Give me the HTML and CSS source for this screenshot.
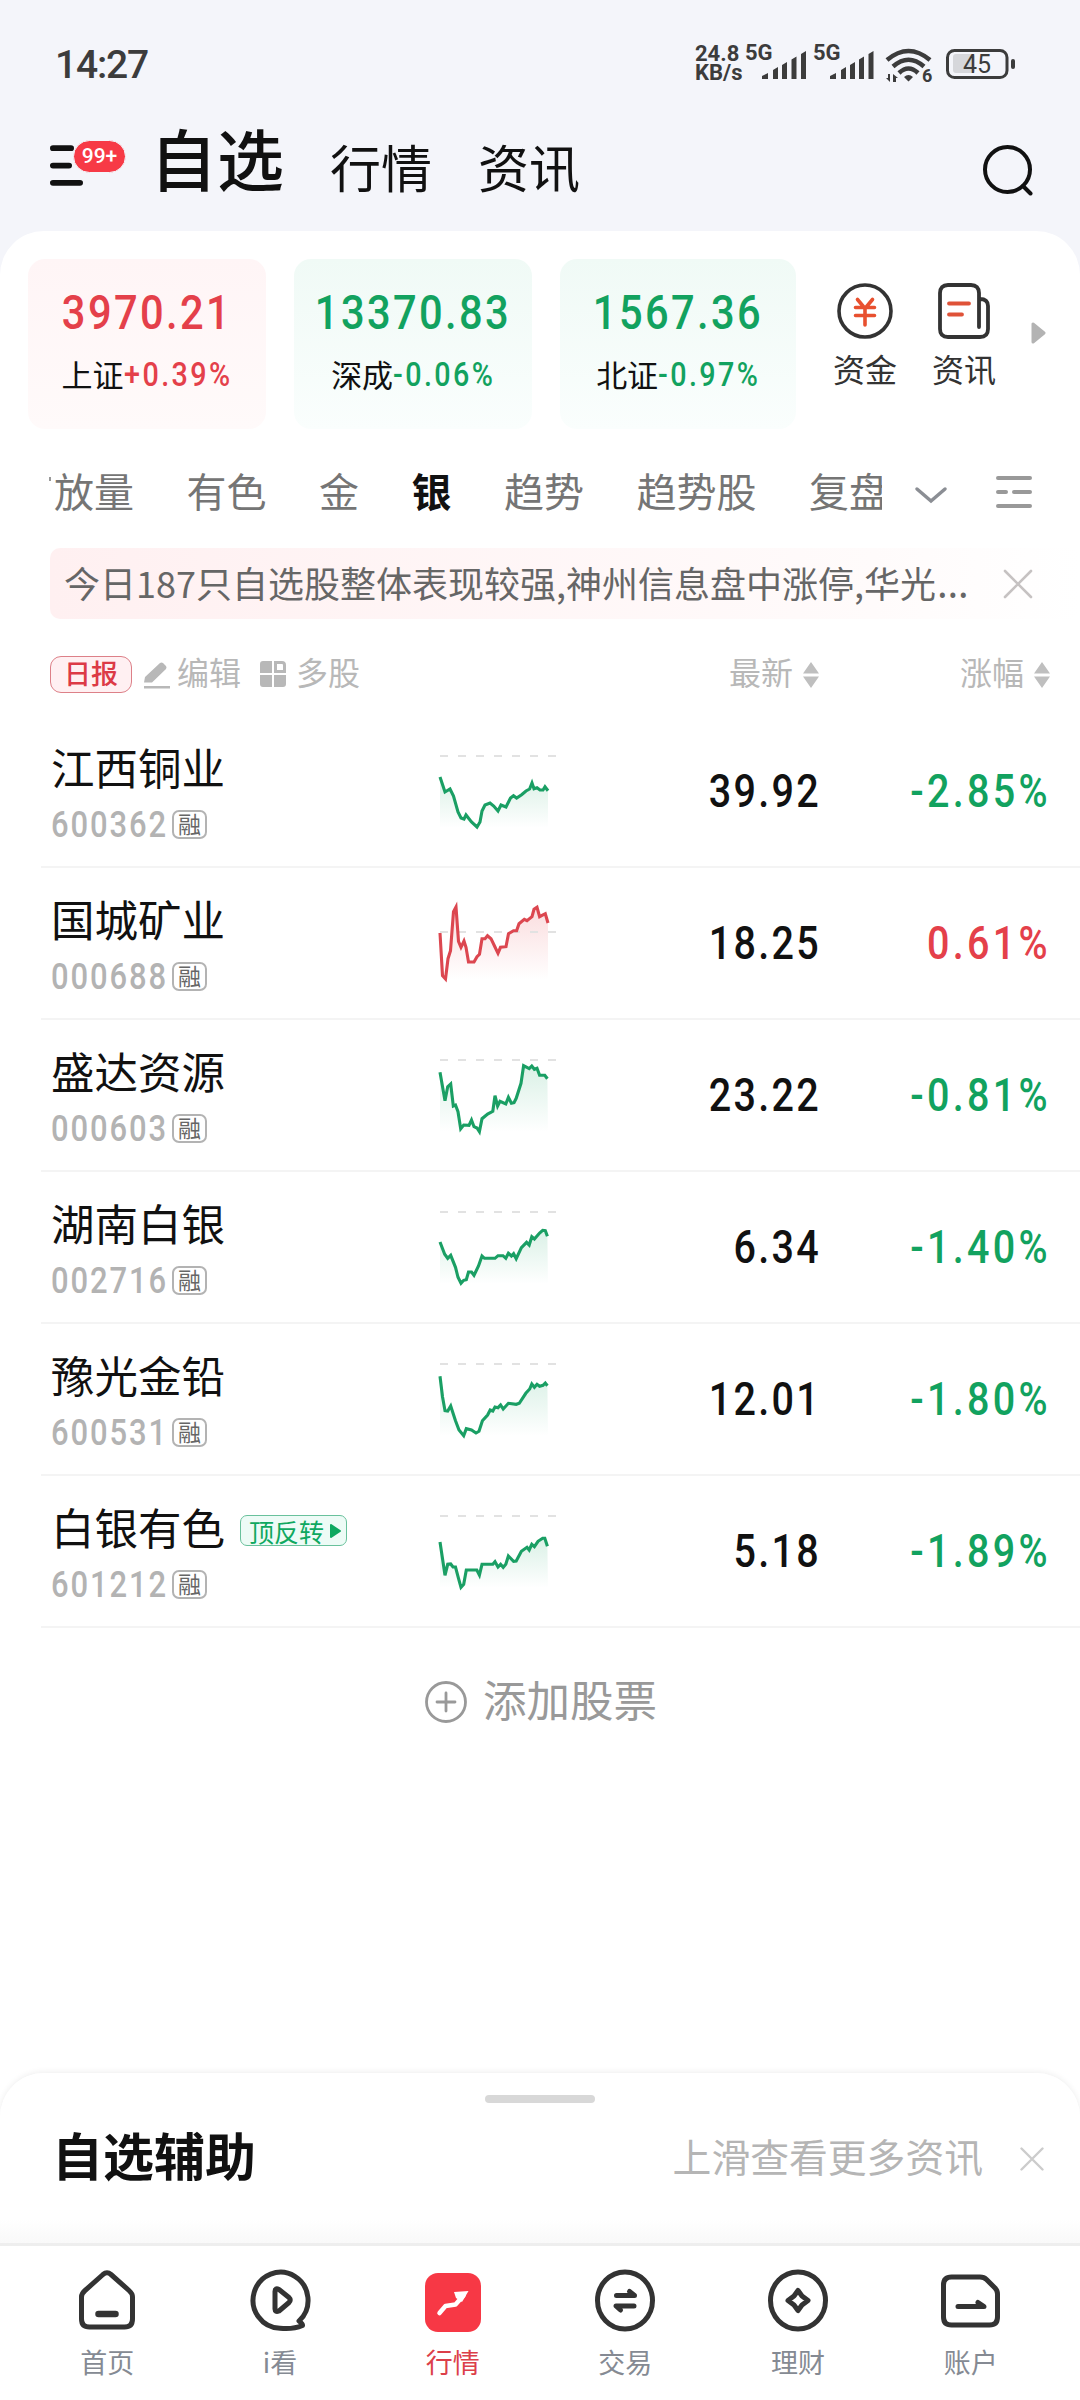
FILE: index.html
```html
<!DOCTYPE html>
<html lang="zh">
<head>
    <meta charset="UTF-8">
    <meta name="viewport" content="width=device-width, initial-scale=1.0">
    <title>自选</title>
    <link rel="stylesheet" href="styles.css">
</head>
<body>
    <div class="status-bar">
        <span class="time">14:27</span>
        <div class="status-icons">
            <div class="speed"><span>24.8</span><span>KB/s</span></div>
            <svg class="signal" width="66" height="40" viewBox="0 0 66 40">
                <text x="2" y="20">5G</text>
                <path d="M19 36l6-3v6h-6zM30 30l5-3v12h-5zM39 25l5-3v17h-5zM48.500 19.500l5-3v22.500h-5zM58 14l5-3v28h-5z"/>
            </svg>
            <svg class="signal" width="66" height="40" viewBox="0 0 66 40">
                <text x="3" y="20">5G</text>
                <path d="M20 36l6-3v6h-6zM31 30l5-3v12h-5zM40 25l5-3v17h-5zM49 19.500l5-3v22.500h-5zM58.500 14l5-3v28h-5z"/>
            </svg>
            <svg class="wifi" width="48" height="36" viewBox="0 0 48 36">
                <path d="M2 12Q23.500-6 45 12M8 18.500Q23.500 5 39 18.500M14 25Q23.500 16 33 25" fill="none" stroke="#3c3c3c" stroke-width="4.500"/>
                <path d="M19 29Q23.500 25 28 29L23.500 33.500ZM5 26v8l-4-4h2v-4zM8 34v-8l5 4h-2v4z"/>
                <text x="37" y="34">6</text>
            </svg>
            <svg class="battery" width="70" height="32" viewBox="0 0 70 32">
                <rect x="1.500" y="1.500" width="59.500" height="27" rx="7" fill="none" stroke="#3c3c3c" stroke-width="3"/>
                <rect x="7" y="5" width="22" height="19" rx="3" fill="#d6d7db"/>
                <rect x="65" y="10" width="4" height="10" rx="2"/>
                <text x="17" y="24">45</text>
            </svg>
        </div>
    </div>

    <div class="header">
        <div class="menu">
            <svg width="40" height="44" viewBox="0 0 40 44">
                <path d="M5 6.500h18M5 24.500h16M5 42.500h27" transform="scale(1 .96)" fill="none" stroke="#111" stroke-width="6" stroke-linecap="round"/>
            </svg>
            <span class="badge">99+</span>
        </div>
        <span class="title active">自选</span>
        <span class="title">行情</span>
        <span class="title">资讯</span>
        <svg class="search" width="52" height="52" viewBox="0 0 52 52" fill="none" stroke="#111" stroke-width="4" stroke-linecap="round">
            <circle cx="25.500" cy="25.500" r="22.500"/>
            <path d="M41 42l7.500 7.500"/>
        </svg>
    </div>

    <div class="panel">
        <div class="indices">
            <div class="index-card up">
                <div class="value">3970.21</div>
                <div class="sub"><span>上证</span><b>+0.39%</b></div>
            </div>
            <div class="index-card down">
                <div class="value">13370.83</div>
                <div class="sub"><span>深成</span><b>-0.06%</b></div>
            </div>
            <div class="index-card down">
                <div class="value">1567.36</div>
                <div class="sub"><span>北证</span><b>-0.97%</b></div>
            </div>
            <div class="shortcut">
                <svg width="58" height="58" viewBox="0 0 58 58" fill="none" stroke-width="3.600" stroke-linecap="round">
                    <circle cx="29" cy="29" r="26" stroke="#333"/>
                    <path d="M21.500 17.500l7.500 9 7.500-9M19.500 25.500h19M19.500 33.500h19M29 26v17" stroke="#e8502f"/>
                </svg>
                <span>资金</span>
            </div>
            <div class="shortcut">
                <svg width="58" height="58" viewBox="0 0 58 58" fill="none" stroke-width="3.800" stroke-linecap="round">
                    <path d="M44 45V11q0-8-8-8H13q-8 0-8 8v36q0 8 8 8h32q8 0 8-8V24q0-7-8-7" stroke="#333"/>
                    <path d="M14 21.500h20M14 32.500h13" stroke="#df5238"/>
                </svg>
                <span>资讯</span>
            </div>
            <svg class="more" width="15" height="22" viewBox="0 0 15 22"><path d="M2 2v18L13 11z" fill="#b3b3b3" stroke="#b3b3b3" stroke-width="3" stroke-linejoin="round"/></svg>
        </div>

        <div class="tabs">
            <div class="tab-list">
                <i class="tab-rest"></i>
                <span>放量</span>
                <span>有色</span>
                <span>金</span>
                <span class="current">银</span>
                <span>趋势</span>
                <span>趋势股</span>
                <span>复盘</span>
            </div>
            <svg class="chevron" width="34" height="20" viewBox="0 0 34 20"><path d="M3 4l14 12L31 4" fill="none" stroke="#8b8e94" stroke-width="3.500" stroke-linecap="round"/></svg>
            <svg class="list-icon" width="38" height="34" viewBox="0 0 38 34"><path d="M3 3h32M3 17h8M19 17h16M3 31h32" fill="none" stroke="#999" stroke-width="4" stroke-linecap="round"/></svg>
        </div>

        <div class="notice">
            <div class="notice-text">今日187只自选股整体表现较强,神州信息盘中涨停,华光<span class="dots">…</span></div>
            <svg width="30" height="30" viewBox="0 0 30 30"><path d="M2 2l26 26M28 2L2 28" stroke="#c6c2c2" stroke-width="2.600" stroke-linecap="round"/></svg>
        </div>

        <div class="toolbar">
            <span class="daily">日报</span>
            <svg class="edit" width="26" height="28" viewBox="0 0 26 28" fill="#b8b8b8"><path d="M1 16L16 2q1.500-1 3 0l3 3q1 1.500 0 3L8 21.500H0z M0 25h26v2.500H0z"/></svg>
            <span>编辑</span>
            <svg class="grid" width="26" height="26" viewBox="0 0 26 26" fill="#b8b8b8">
                <path d="M3 0h9v12H0V3q0-3 3-3zM0 14h12v12H3q-3 0-3-3zM14 14h12v9q0 3-3 3h-9z"/>
                <path d="M15.500 1.500H22q2.500 0 2.500 2.500v6.500h-9z" fill="none" stroke="#b8b8b8" stroke-width="3"/>
            </svg>
            <span>多股</span>
            <div class="sort sort-price">最新 <svg width="16" height="26" viewBox="0 0 16 26"><path d="M8 0l8 11.500H0zM8 26l8-11.500H0z"/></svg></div>
            <div class="sort sort-change">涨幅 <svg width="16" height="26" viewBox="0 0 16 26"><path d="M8 0l8 11.500H0zM8 26l8-11.500H0z"/></svg></div>
        </div>

        <svg class="defs" width="0" height="0">
            <defs>
                <linearGradient id="fillGreen" x1="0" y1="0" x2="0" y2="1"><stop offset="0" stop-color="#1aa566" stop-opacity=".16"/><stop offset="1" stop-color="#1aa566" stop-opacity="0"/></linearGradient>
                <linearGradient id="fillRed" x1="0" y1="0" x2="0" y2="1"><stop offset="0" stop-color="#e64048" stop-opacity=".18"/><stop offset="1" stop-color="#e64048" stop-opacity="0"/></linearGradient>
            </defs>
        </svg>

        <div class="stocks" id="stocks"></div>

        <div class="add">
            <svg width="44" height="44" viewBox="0 0 44 44" fill="none" stroke="#999" stroke-width="2.800" stroke-linecap="round"><circle cx="22" cy="22" r="19.500"/><path d="M13 22h18M22 13v18"/></svg>
            <span>添加股票</span>
        </div>
    </div>

    <div class="sheet">
        <div class="handle"></div>
        <div class="sheet-row">
            <span class="sheet-title">自选辅助</span>
            <span class="sheet-tip">上滑查看更多资讯</span>
            <svg width="24" height="24" viewBox="0 0 24 24"><path d="M1.500 1.500l21 21M22.500 1.500l-21 21" stroke="#ccc" stroke-width="2.400" stroke-linecap="round"/></svg>
        </div>
    </div>

    <div class="nav">
        <div class="nav-item">
            <svg width="64" height="64" viewBox="0 0 64 64">
                <path d="M28 6.500q4-3.500 8 0L54 22.500q3.500 3 3.500 6.500v22q0 8-8 8h-35q-8 0-8-8V29q0-3.500 3.500-6.500z"/>
                <path d="M23.500 46h17" stroke-width="6.500"/>
            </svg>
            <span>首页</span>
        </div>
        <div class="nav-item">
            <svg width="64" height="64" viewBox="0 0 64 64">
                <path d="M51.500 52.500A27.500 28 0 1 0 32 60.200Q45 61.500 54.500 57.500Q55 56 51 53Z"/>
                <path d="M27 23.500q0-4 4-2L41 29.500q2.500 2.500 0 5L31 43q-4 1.500-4-2z"/>
            </svg>
            <span>i看</span>
        </div>
        <div class="nav-item on">
            <svg width="64" height="64" viewBox="0 0 64 64">
                <rect class="solid" x="4" y="5" width="56" height="59" rx="13"/>
                <path class="white" d="M18.500 45l6-7 10-1.500 8-9" stroke-width="4.500"/>
                <path class="white-fill" d="M33 24l14.500-1-6.500 11-6-4z"/>
            </svg>
            <span>行情</span>
        </div>
        <div class="nav-item">
            <svg width="64" height="64" viewBox="0 0 64 64">
                <ellipse cx="32" cy="32.500" rx="27.500" ry="28.500"/>
                <path d="M23.500 27.500h18l-5-4M41 38H23l4.500 4"/>
            </svg>
            <span>交易</span>
        </div>
        <div class="nav-item">
            <svg width="64" height="64" viewBox="0 0 64 64">
                <ellipse cx="32" cy="32.500" rx="27.500" ry="28.500"/>
                <path d="M32 22.500l4 5.500 6 4.500-6 4.500-4 5.500-4-5.500-6-4.500 6-4.500z"/>
            </svg>
            <span>理财</span>
        </div>
        <div class="nav-item">
            <svg width="64" height="64" viewBox="0 0 64 64">
                <path d="M12.500 9H41q4 0 6.500 2.500l8.500 8.500q2.500 2.500 2.500 6v23q0 8-8 8h-38q-8 0-8-8V17q0-8 8-8z"/>
                <path d="M19 38.500h26l-6-4"/>
            </svg>
            <span>账户</span>
        </div>
    </div>

    <script>
        // base 为昨收虚线的高度, line 为分时走势
        const stocks = [
            { name: '江西铜业', code: '600362', price: '39.92', change: '-2.85%', base: 41,
              line: '440,62 445,77 450,74 453.5,81 458,97 461,103 464,104 466,100 471.5,107 477,112 480,107 482,96 485,90 490,88 493.7,91 498,96 501,90 506,92 510.5,83 513.5,80.7 516.6,83 521.6,79.7 526,76 529.6,74 532,68 534,73.7 537,72.7 540,75 543,75 545,71.7 548,75.7' },
            { name: '国城矿业', code: '000688', price: '18.25', change: '0.61%', base: 65,
              line: '440,66 442.5,108.7 445.5,112 448,91.7 450.5,83.7 453.5,44.7 456,40 458.5,74.3 461,80.3 464,74 466,80.3 468.5,95 474,95 477,89.7 479.5,87.3 482,71.7 485,71.7 487.5,68.7 491,71.7 494.5,79 498,86.3 500.5,80.3 506,79.7 508.5,66.7 513.5,63.7 516.6,63.7 519,56.7 524.3,52.3 527,53.7 532,49.7 534,42.3 537,40.3 539.6,49.7 545.3,46.7 548,56' },
            { name: '盛达资源', code: '000603', price: '23.22', change: '-0.81%', base: 41,
              line: '440,53.3 445,81.7 447.7,67.7 450.7,65 453.3,87 455.5,86 458,92.7 460.7,109.7 463.7,106 469,106.3 471.5,101 474,107.7 477,109 479.4,112.7 482,99.7 487.6,95 492.8,92.3 495,76.7 497.6,87 500,82.3 505.8,85 508.4,78.3 511.4,84.3 514,83.7 516.2,79.3 521,64.3 523.6,46.7 529.2,49.7 531.8,47 534.4,50.3 537,49.3 539.6,56.3 544.8,56.3 547.4,59.7' },
            { name: '湖南白银', code: '002716', price: '6.34', change: '-1.40%', base: 41,
              line: '440,71 444.7,83.3 447.7,87.3 450.7,84.3 455.5,96.3 458,106.3 461,112.3 463.7,109.3 466.3,108.7 468.5,101 471.5,101 474,104.3 478.5,95 482,85 484.5,87.3 495,87.3 498,84.7 503,84.7 505.8,87.3 508.4,82.3 511.4,85 513.6,82.7 516.2,87.7 521.4,76.7 526.6,71.3 529.2,74 531.8,65.7 534.4,68 539.6,62 542.7,59.3 545.3,59.7 547.4,65.3' },
            { name: '豫光金铅', code: '600531', price: '12.01', change: '-1.80%', base: 41,
              line: '440,53.3 442.5,73.7 445,87.7 447.7,88 450.7,83 455.5,97.7 459,107 463.7,112.7 466.3,105.7 471.5,107 476,110 479,108.3 482.4,97.7 487.6,92 490.2,87 492.8,88 495,84 498,84.7 500.6,82 503.2,86 508.4,80.3 516.2,81.3 519.3,80.3 525.8,70.3 529.7,66 531.8,61 534.4,64.3 537,61.3 539.6,63.3 543,62.3 545.3,60 547.4,62.7' },
            { name: '白银有色', code: '601212', price: '5.18', change: '-1.89%', base: 41, tag: '顶反转',
              line: '440,67 445,100.3 447.7,89.3 450.7,89 453,92 455.5,92 458.5,103.3 461,112.3 463.7,109.3 466.3,95 476.8,95 479.4,100 482,89.3 492.8,89.3 495,86.7 498,92 500.6,89.3 503.2,92.3 505.8,89.3 508.4,81 513.6,86.3 516.2,86 521.4,76.3 527,72.3 529.2,75 531.8,69.3 534.4,71.7 538,66.3 542.7,63.3 544.8,63.3 547.4,71.3' }
        ];

        document.getElementById('stocks').innerHTML = stocks.map(s => {
            const down = s.change.startsWith('-');
            const tag = s.tag ? `<span class="tag">${s.tag}<svg width="11" height="14" viewBox="0 0 11 14"><path d="M1 1v12l9-6z" fill="#0fa860" stroke="#0fa860" stroke-width="2" stroke-linejoin="round"/></svg></span>` : '';
            return `
            <div class="stock ${down ? 'down' : 'up'}">
                <div class="info">
                    <div class="name">${s.name}${tag}</div>
                    <div class="code"><span class="code-num">${s.code}</span><span class="rong">融</span></div>
                </div>
                <svg class="spark" width="124" height="90" viewBox="436 30 124 90">
                    <polygon points="440,113 ${s.line} 548,113" fill="url(#${down ? 'fillGreen' : 'fillRed'})"/>
                    <path d="M440 ${s.base}h116" stroke="#e2e2e2" stroke-width="2" stroke-dasharray="8 10"/>
                    <polyline points="${s.line}" fill="none" stroke="${down ? '#1a9f64' : '#dc4750'}" stroke-width="3.1"/>
                </svg>
                <div class="price">${s.price}</div>
                <div class="change">${s.change}</div>
            </div>`;
        }).join('');
    </script>
</body>
</html>
```
FILE: styles.css
```css
* {
    box-sizing: border-box;
}
body {
    margin: 0;
    width: 1080px;
    height: 2400px;
    overflow: hidden;
    display: flex;
    flex-direction: column;
    background: linear-gradient(#f4f5fa 300px, #fff 300px);
    color: #111;
    font-family: "Noto Sans CJK SC", sans-serif;
    line-height: 1;
    white-space: nowrap;
}
svg {
    display: block;
    flex: none;
}

/* 状态栏 */
.status-bar {
    height: 120px;
    padding: 44px 64px 0 55px;
    display: flex;
    justify-content: space-between;
    color: #3c3c3c;
}
.status-bar svg {
    fill: #3c3c3c;
    font-family: Roboto, sans-serif;
}
.time {
    font: 500 39px/42px Roboto, sans-serif;
    letter-spacing: -1.2px;
}
.status-icons {
    display: flex;
    height: 40px;
}
.speed {
    width: 48px;
    display: flex;
    flex-direction: column;
    font: bold 22px/19px Roboto, sans-serif;
}
.signal {
    margin-top: -4px;
    margin-right: 1px;
    font-size: 22px;
    font-weight: bold;
}
.wifi {
    margin-left: 8px;
    margin-top: 4px;
    font-size: 18px;
    font-weight: bold;
}
.battery {
    margin-left: 13px;
    margin-top: 5px;
    font-size: 25px;
}

/* 顶部标题 */
.header {
    height: 111px;
    padding: 0 48px;
    display: flex;
    align-items: flex-start;
}
.menu {
    position: relative;
    width: 102px;
    padding-top: 22px;
}
.badge {
    position: absolute;
    left: 25px;
    top: 20px;
    width: 53px;
    height: 33px;
    border-radius: 17px;
    border: 1px solid #f4f5fa;
    background-color: #f73a46;
    color: #fff;
    font: 500 21px/31px Roboto, sans-serif;
    text-align: center;
}
.title {
    font-size: 51px;
    line-height: 51px;
    margin: 21px 46px 0 0;
}
.title.active {
    font-size: 67px;
    line-height: 67px;
    font-weight: 500;
    margin-top: 3px;
    margin-right: 46px;
}
.search {
    margin: 24px -2px 0 auto;
}

.panel {
    height: 1842px;
    background-color: #fff;
    border-radius: 44px 44px 0 0;
    padding-top: 28px;
}

/* 指数 */
.indices {
    height: 170px;
    padding-left: 28px;
    display: flex;
}
.index-card {
    width: 238px;
    height: 170px;
    margin-right: 28px;
    border-radius: 17px;
    text-align: center;
}
.index-card:nth-child(3) {
    width: 236px;
    margin-right: 30px;
}
.index-card.up {
    background: linear-gradient(#fff5f6, #fffafa);
}
.index-card.down {
    background: linear-gradient(#f0faf6, #fafefd);
}
.up .value, .up b, .up .change {
    color: #e4404a;
}
.down .value, .down b, .down .change {
    color: #12a25f;
}
/* 数字压窄一些, 接近行情数字字体 */
.value {
    height: 69px;
    padding-top: 29px;
    font: 500 49px/49px Roboto, sans-serif;
    letter-spacing: 2.8px;
    transform: scaleX(0.85);
    display: flex;
    justify-content: center;
}
.sub {
    height: 40px;
    margin-top: 27px;
    display: flex;
    justify-content: center;
    font-size: 31px;
    line-height: 37px;
}
.sub b {
    margin-right: -16px;
    font: 500 33px/40px Roboto, sans-serif;
    letter-spacing: 2.8px;
    transform: scaleX(0.87);
    transform-origin: left;
}
.shortcut {
    width: 64px;
    margin-right: 35px;
    padding-top: 23px;
    display: flex;
    flex-direction: column;
    align-items: center;
    font-size: 32px;
    color: #333;
}
.index-card + .shortcut {
    margin-left: 7px;
}
.shortcut span {
    margin-top: 12px;
}
.more {
    margin-top: 63px;
}

/* 分组标签 */
.tabs {
    height: 119px;
    padding: 41px 46px 0 49px;
    display: flex;
}
.tab-list {
    width: 833px;
    overflow-x: clip;
    display: flex;
    font-size: 40px;
    color: #757575;
}
.tab-list span {
    flex: none;
    margin-right: 52.5px;
}
.tab-rest {
    flex: none;
    width: 2px;
    height: 4px;
    margin: 7px 3px 0 0;
    background-color: #999;
}
.tab-list .current {
    color: #111;
    font-weight: bold;
}
.chevron {
    margin: 15px 47px 0 32px;
}
.list-icon {
    margin-top: 5px;
}

.notice {
    height: 71px;
    margin-left: 50px;
    padding: 0 47px 0 14px;
    display: flex;
    align-items: center;
    justify-content: space-between;
    border-radius: 10px;
    background: linear-gradient(90deg, #fff0f1, #fffbfb 80%, #fff);
    font-size: 36px;
    color: #666;
}
.notice-text {
    margin-bottom: 3px;
}
.dots {
    margin-left: 1px;
    font-family: "Noto Sans", sans-serif;
    font-size: 40px;
    line-height: 36px;
}

.toolbar {
    height: 97px;
    padding: 37px 30px 0 50px;
    display: flex;
    font-size: 32px;
    line-height: 31px;
    color: #b8b8b8;
}
.daily {
    width: 82px;
    height: 37px;
    border: 1px solid #dd8088;
    border-radius: 11px;
    background-color: #fff0f2;
    color: #dc3a46;
    font-size: 27px;
    font-weight: 500;
    text-align: center;
}
.edit {
    margin: 5px 7px 0 12px;
}
.grid {
    margin: 5px 10px 0 19px;
}
.sort {
    display: flex;
    gap: 10px;
}
.sort svg {
    margin-top: 6px;
    fill: #bfbfbf;
}
.sort-price {
    margin-left: auto;
}
.sort-change {
    margin-left: 141px;
}

/* 自选列表 */
.defs {
    position: absolute;
}
.stock {
    height: 152px;
    margin-left: 41px;
    padding: 0 32px 0 10px;
    display: flex;
    border-bottom: 2px solid #f4f4f4;
}
.info {
    width: 385px;
    padding-top: 27px;
}
.name {
    height: 59px;
    display: flex;
    font-size: 43.500px;
    line-height: 48px;
}
.code {
    display: flex;
    padding-top: 3px;
    color: #b3b3b3;
}
.code-num {
    margin-right: -19px;
    font: 500 36px/40px Roboto, sans-serif;
    letter-spacing: 2.2px;
    transform: scaleX(0.86);
    transform-origin: left;
}
.rong {
    width: 35px;
    height: 29px;
    margin: 5px 0 0 4px;
    border: 2px solid #b3b3b3;
    border-radius: 7px;
    font-size: 23px;
    line-height: 22px;
    text-align: center;
    color: #666;
}
.tag {
    width: 107px;
    height: 31px;
    margin: 12px 0 0 15px;
    padding-left: 8px;
    display: flex;
    align-items: center;
    gap: 6px;
    border: 1px solid #69c19c;
    border-radius: 7px;
    background-color: #edfbf6;
    color: #0fa860;
    font-size: 25px;
    line-height: 26px;
}
.spark {
    margin-top: 29px;
}
.price, .change {
    font: 500 46.500px/56px Roboto, sans-serif;
    text-align: right;
    padding-top: 47px;
    transform: scaleX(0.85);
    transform-origin: right;
}
.price {
    width: 261px;
    letter-spacing: 2.7px;
}
.change {
    flex: 1;
    margin-right: -3px;
    letter-spacing: 3.9px;
}

.add {
    height: 148px;
    padding-left: 1px;
    display: flex;
    align-items: center;
    justify-content: center;
    gap: 15px;
    font-size: 43.500px;
    color: #999;
}
.add span {
    margin-bottom: 6px;
}

/* 底部抽屉 */
.sheet {
    height: 170px;
    background: linear-gradient(#fff 146px, #f9f9f9 170px);
    border-radius: 44px 44px 0 0;
    box-shadow: 0 -1px 6px rgba(0, 0, 0, 0.07);
    padding-top: 22px;
}
.handle {
    width: 110px;
    height: 8px;
    margin: 0 auto;
    border-radius: 4px;
    background-color: #d8d8d8;
}
.sheet-row {
    height: 112px;
    padding: 0 36px 0 52px;
    display: flex;
    align-items: center;
}
.sheet-title {
    margin-bottom: 9px;
    font-size: 51px;
    font-weight: bold;
}
.sheet-tip {
    margin-left: auto;
    margin-right: 37px;
    margin-bottom: 7px;
    font-size: 38.800px;
    color: #b5b5b5;
}

/* 底部导航 */
.nav {
    height: 157px;
    padding: 0 23px 0 21px;
    display: flex;
    background-color: #fff;
    border-top: 3px solid #eee;
}
.nav-item {
    flex: 1;
    padding-top: 22px;
    display: flex;
    flex-direction: column;
    align-items: center;
    gap: 16px;
    font-size: 27px;
    color: #858a93;
}
.nav-item svg {
    fill: none;
    stroke: #333;
    stroke-width: 5;
    stroke-linecap: round;
    stroke-linejoin: round;
}
.nav-item.on {
    color: #dc3f4a;
}
.nav-item .solid {
    fill: #f73845;
    stroke: none;
}
.nav-item .white {
    stroke: #fff;
}
.nav-item .white-fill {
    fill: #fff;
    stroke: none;
}
```
